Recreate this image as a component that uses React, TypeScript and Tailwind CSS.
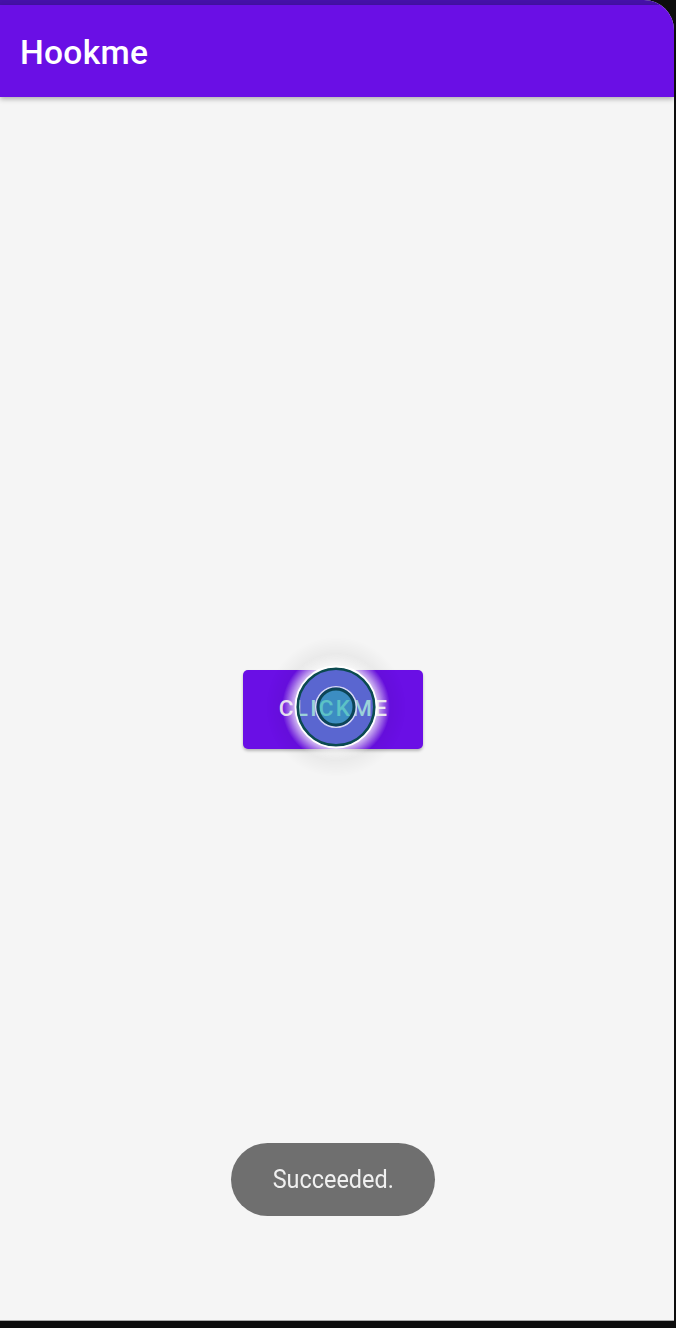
import React from "react";

export default function App() {
  return (
    <div className="w-[676px] h-[1328px] bg-[#0d0d0d] relative overflow-hidden" style={{ fontFamily: "Roboto, 'Noto Sans', sans-serif" }}>
      <div className="w-[674px] h-[1321px] rounded-tr-[30px] overflow-hidden bg-[#f5f5f5] flex flex-col border-b border-[#a8a8a8]">
        <div className="h-[5px] bg-[#4511a8] shrink-0" />
        <div className="h-[92px] bg-[#6a0fe5] shrink-0 flex items-center pl-[20px] pt-[5px] shadow-[0_2px_5px_rgba(0,0,0,0.3)] relative z-10">
          <span className="text-white text-[33.5px] font-medium tracking-[0.3px]">Hookme</span>
        </div>
        <div className="flex-1 flex items-center justify-center pr-[8px] pt-[1px]">
          <div className="relative">
            <button className="w-[180px] h-[79px] bg-[#6a0fe5] rounded-[5px] shadow-[0_2px_3px_rgba(0,0,0,0.25)] text-[#ece6f7] text-[22.5px] font-medium tracking-[2.3px] flex items-center justify-center pl-[2px]">
              CLICKME
            </button>
            <svg className="absolute left-[23px] top-[-33px] pointer-events-none" width="140" height="140" viewBox="0 0 140 140">
              <defs>
                <radialGradient id="shade" cx="70" cy="70" r="70" gradientUnits="userSpaceOnUse">
                  <stop offset="0.55" stopColor="#000" stopOpacity="0.08" />
                  <stop offset="1" stopColor="#000" stopOpacity="0" />
                </radialGradient>
                <radialGradient id="glow" cx="70" cy="70" r="54" gradientUnits="userSpaceOnUse">
                  <stop offset="0.72" stopColor="#ffffff" stopOpacity="0.85" />
                  <stop offset="1" stopColor="#ffffff" stopOpacity="0" />
                </radialGradient>
                <mask id="ringmask">
                  <rect width="140" height="140" fill="white" />
                  <circle cx="70" cy="70" r="40" fill="black" />
                </mask>
              </defs>
              <circle cx="70" cy="70" r="70" fill="url(#shade)" mask="url(#ringmask)" />
              <circle cx="70" cy="70" r="54" fill="url(#glow)" mask="url(#ringmask)" />
              <circle cx="70" cy="70" r="38.5" fill="rgba(74,189,187,0.5)" stroke="#0b4a50" strokeWidth="3" />
              <circle cx="70" cy="70" r="40.5" fill="none" stroke="#ffffff" strokeWidth="1.8" />
              <circle cx="70" cy="70" r="20.3" fill="none" stroke="#d6d8f4" strokeWidth="1.5" />
              <circle cx="70" cy="70" r="18" fill="rgba(30,180,180,0.5)" stroke="#0c4556" strokeWidth="3" />
            </svg>
          </div>
        </div>
      </div>
      <div className="absolute left-[231px] top-[1143px] w-[204px] h-[73px] rounded-full bg-[#6f6f6f] flex items-center justify-center">
        <span className="text-[#f0f0f0] text-[26px] scale-x-[0.9] inline-block">Succeeded.</span>
      </div>
    </div>
  );
}
